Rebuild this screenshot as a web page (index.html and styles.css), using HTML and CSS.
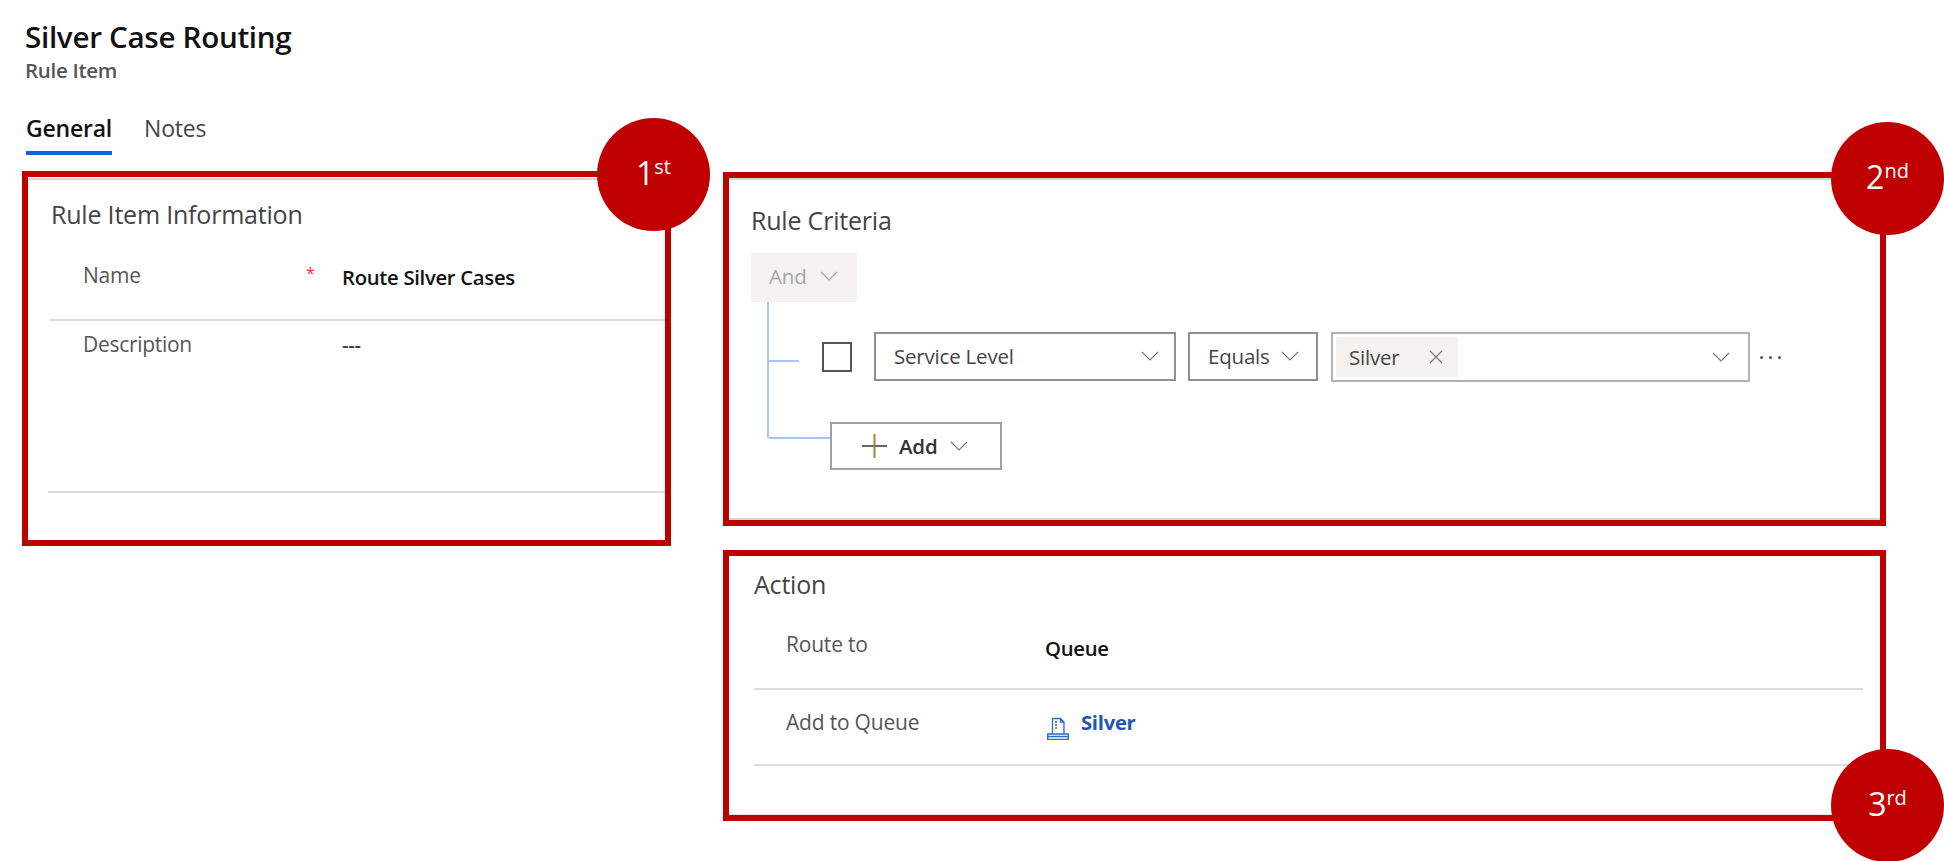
FILE: index.html
```html
<!DOCTYPE html>
<html lang="en">
<head>
<meta charset="utf-8">
<title>Silver Case Routing</title>
<link rel="stylesheet" href="styles.css">
</head>
<body>
<main class="page">
  <header class="head">
    <h1 class="title">Silver Case Routing</h1>
    <p class="subtitle">Rule Item</p>
  </header>
  <nav class="tabs">
    <a class="tab tab-active">General</a>
    <a class="tab">Notes</a>
  </nav>
  <div class="columns">
    <section class="card card-info">
      <div class="badge badge-one"><span>1<sup>st</sup></span></div>
      <div class="inner inner-info">
        <h2 class="section-title">Rule Item Information</h2>
        <div class="row row-name">
          <span class="label">Name</span><span class="req">*</span><span class="value">Route Silver Cases</span>
        </div>
        <div class="row row-desc">
          <span class="label">Description</span><span></span><span class="value dashes">---</span>
        </div>
      </div>
    </section>
    <div class="right">
      <section class="card card-criteria">
        <div class="badge badge-two"><span>2<sup>nd</sup></span></div>
        <div class="inner inner-criteria">
          <h2 class="section-title">Rule Criteria</h2>
          <div class="and-btn">And
            <svg class="chev" viewBox="0 0 18 10"><path d="M1 1l8 8 8-8"/></svg>
          </div>
          <div class="tree">
            <div class="cond">
              <i class="branch"></i>
              <i class="check"></i>
              <div class="select select-field">Service Level
                <svg class="chev" viewBox="0 0 18 10"><path d="M1 1l8 8 8-8"/></svg>
              </div>
              <div class="select select-op">Equals
                <svg class="chev" viewBox="0 0 18 10"><path d="M1 1l8 8 8-8"/></svg>
              </div>
              <div class="select select-value">
                <span class="chip">Silver
                  <svg class="close" viewBox="0 0 14 14"><path d="M1 1l12 12M13 1L1 13"/></svg>
                </span>
                <svg class="chev" viewBox="0 0 18 10"><path d="M1 1l8 8 8-8"/></svg>
              </div>
              <div class="more"><i></i><i></i><i></i></div>
            </div>
            <div class="add-row">
              <i class="branch branch-add"></i>
              <div class="add-btn">
                <svg class="plus" viewBox="0 0 25 24"><path class="plus-h" d="M0 12h25"/><path class="plus-v" d="M12.5 0v24"/></svg>
                <span class="add-text">Add</span>
                <svg class="chev" viewBox="0 0 18 10"><path d="M1 1l8 8 8-8"/></svg>
              </div>
            </div>
          </div>
        </div>
      </section>
      <section class="card card-action">
        <div class="badge badge-three"><span>3<sup>rd</sup></span></div>
        <div class="inner inner-action">
          <h2 class="section-title">Action</h2>
          <div class="row row-route">
            <span class="label">Route to</span><span class="value">Queue</span>
          </div>
          <div class="row row-queue">
            <span class="label">Add to Queue</span>
            <a class="value link">
              <svg class="queue-icon" viewBox="0 0 22 23"><path d="M5.5 17V1.5h8l3.500 3.500v12M13.500 1.500V5H17M8 5h2M8 8h2M8 11h2"/><path d="M.7 17h20.600v5.300H.7zM.7 19.500h20.600"/></svg>
              Silver
            </a>
          </div>
        </div>
      </section>
    </div>
  </div>
</main>
</body>
</html>
```
FILE: styles.css
```css
* { box-sizing: border-box; }
html, body { margin: 0; height: 861px; overflow: hidden; background: #fff; }
body { font-family: "Open Sans", "Noto Sans", sans-serif; color: #444; }
.page { padding: 18px 58px 0 22px; width: 1944px; }

.head { padding-left: 3px; }
.title { margin: 0; font-size: 29.600px; line-height: 38px; font-weight: 600; color: #111; letter-spacing: -.3px; }
.subtitle { margin: 0; font-size: 20.500px; line-height: 28px; font-weight: 600; color: #555; letter-spacing: -.3px; }

.tabs { display: flex; gap: 32px; margin-top: 28px; padding-left: 4px; height: 59px; }
.tab { display: block; height: 32px; font-size: 23px; line-height: 32px; color: #444; letter-spacing: -.2px; }
.tab-active { font-weight: 600; color: #111; border-bottom: 4px solid #0f62e6; height: 43px; }

.columns { display: flex; gap: 52px; align-items: flex-start; }
.right { display: flex; flex-direction: column; gap: 24px; margin-top: 1px; width: 1163px; }

.card { position: relative; border: 6px solid #c00000; background: #fff; }
.card-info { width: 649px; height: 375px; }
.card-criteria { height: 354px; }
.card-action { height: 271px; }
.inner { height: 100%; }
.inner-info { border-top: 2px solid #d6d6d6; margin-top: 1px; padding: 18px 0 0 22px; height: auto; }
.inner-info .section-title { padding-left: 1px; }
.inner-criteria { border-top: 2px solid #d6d6d6; border-bottom: 2px solid #d6d6d6; padding: 24px 0 0 22px; }
.inner-criteria .section-title { margin-bottom: 1px; }
.inner-action { padding: 12px 17px 0 25px; border-bottom: 1px solid #e3e3e3; }

.section-title { margin: 0; font-size: 25px; line-height: 32px; font-weight: 400; color: #444; letter-spacing: -.2px; }

.row { display: grid; font-size: 21px; line-height: 24px; }
.label { padding-left: 33px; color: #555; letter-spacing: -.2px; }
.value { font-size: 20.300px; font-weight: 600; color: #111; letter-spacing: -.3px; }
.req { color: #e0312d; font-size: 16px; line-height: 20px; }

.row-name { grid-template-columns: 256px 36px 1fr; margin-top: 21px; height: 70px; border-bottom: 2px solid #dcdcdc; padding-top: 12px; }
.row-name .value { padding-top: 2px; }
.row-desc { grid-template-columns: 258px 36px 1fr; margin-left: -2px; height: 172px; padding-top: 11px; border-bottom: 2px solid #dcdcdc; }
.row-desc .label { padding-left: 35px; }
.row-desc .label { letter-spacing: -.3px; }
.dashes { color: #444; }

.and-btn { display: flex; align-items: center; width: 106px; height: 49px; margin-top: 17px; padding: 0 0 3px 18px; gap: 14px; background: #f3f2f1; color: #a6a6a6; font-size: 20.500px; letter-spacing: -.2px; }
.chev { width: 18px; height: 10px; flex: none; fill: none; stroke: #777; stroke-width: 1.200; }
.and-btn .chev { stroke: #a6a6a6; }

.tree { margin-left: 16px; height: 136px; border-left: 2px solid #a6c5ff; }
.cond { display: flex; align-items: center; padding-top: 30px; }
.branch { display: block; flex: none; width: 30px; height: 2px; background: #a6c5ff; align-self: flex-start; margin-top: 28px; }
.check { display: block; flex: none; width: 30px; height: 30px; margin: 0 22px 0 23px; border: 2px solid #555; }
.select { display: flex; align-items: center; justify-content: space-between; height: 50px; border: 2px solid #909090; font-size: 20.500px; color: #444; letter-spacing: -.2px; }
.select-field { width: 302px; height: 49px; align-self: flex-start; padding: 0 15px 1px 18px; }
.select-op { width: 130px; height: 49px; align-self: flex-start; margin-left: 12px; padding: 0 17px 1px 18px; }
.select-value { width: 419px; margin-left: 13px; padding: 0 18px 0 3px; border-color: #b2b2b2; }
.chip { display: flex; align-items: center; justify-content: space-between; width: 122px; height: 40px; padding: 0 15px 1px 13px; background: #f3f2f1; }
.close { width: 14px; height: 14px; fill: none; stroke: #777; stroke-width: 1.200; }
.more { display: flex; gap: 6px; margin-left: 10px; }
.more i { display: block; width: 3px; height: 3px; border-radius: 50%; background: #555; }

.add-row { display: flex; margin-top: 40px; align-items: flex-start; }
.branch-add { width: 61px; margin-top: 15px; }
.add-btn { display: flex; align-items: center; width: 172px; height: 48px; padding-left: 30px; border: 2px solid #a0a0a0; background: #fff; }
.plus { width: 25px; height: 24px; flex: none; fill: none; stroke-width: 2; }
.plus-h { stroke: #666; }
.plus-v { stroke: #a9803f; }
.add-text { margin-left: 12px; font-size: 20.500px; font-weight: 600; color: #333; letter-spacing: -.2px; }
.add-btn .chev { margin-left: 13px; }

.row-route { grid-template-columns: 291px 1fr; height: 76px; margin-top: 14px; padding-top: 18px; border-bottom: 2px solid #dcdcdc; }
.row-route .value { padding-top: 4px; }
.row-route .label, .row-queue .label { padding-left: 32px; }
.row-queue { grid-template-columns: 291px 1fr; height: 76px; padding-top: 20px; border-bottom: 2px solid #dcdcdc; }
.link { display: flex; align-items: flex-start; gap: 12px; color: #1e56b0; font-weight: 700; }
.queue-icon { width: 22px; height: 23px; flex: none; margin: 7px 0 0 2px; fill: none; stroke: #2b6cc4; stroke-width: 1.300; }

.badge { position: absolute; display: flex; align-items: center; justify-content: center; width: 113px; height: 113px; padding-bottom: 3px; border-radius: 50%; background: #c00000; color: #fff; font-size: 32px; line-height: 1; }
.badge sup { font-size: 20px; line-height: 0; vertical-align: 11px; }
.badge-one { left: 569px; top: -59px; }
.badge-two { left: 1102px; top: -56px; }
.badge-three { left: 1102px; top: 193px; }
```
